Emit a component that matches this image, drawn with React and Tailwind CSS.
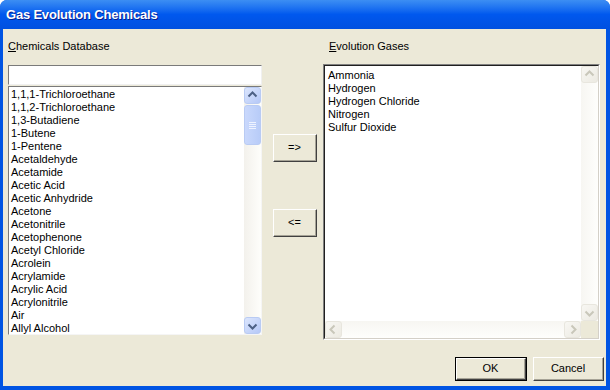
import React from 'react';

const chemicals = [
  '1,1,1-Trichloroethane', '1,1,2-Trichloroethane', '1,3-Butadiene', '1-Butene', '1-Pentene',
  'Acetaldehyde', 'Acetamide', 'Acetic Acid', 'Acetic Anhydride', 'Acetone', 'Acetonitrile',
  'Acetophenone', 'Acetyl Chloride', 'Acrolein', 'Acrylamide', 'Acrylic Acid', 'Acrylonitrile',
  'Air', 'Allyl Alcohol',
];

const gases = ['Ammonia', 'Hydrogen', 'Hydrogen Chloride', 'Nitrogen', 'Sulfur Dioxide'];

const font = { fontFamily: '"Liberation Sans", Arial, sans-serif' };

const Arrow = ({ dir, color }) => {
  const d = {
    up: 'M4.5 9.5 L8.5 5.5 L12.5 9.5',
    down: 'M4.5 7.5 L8.5 11.5 L12.5 7.5',
    left: 'M9.5 4.5 L5.5 8.5 L9.5 12.5',
    right: 'M7.5 4.5 L11.5 8.5 L7.5 12.5',
  }[dir];
  return (
    <svg width="17" height="17" viewBox="0 0 17 17" className="block">
      <path d={d} fill="none" stroke={color} strokeWidth="2" />
    </svg>
  );
};

const ScrollBtn = ({ dir, disabled }) => (
  <div
    className={`w-[17px] h-[17px] shrink-0 rounded-[3px] border ${
      disabled
        ? 'border-[#E8E6DE] bg-gradient-to-br from-[#F8F7F3] to-[#ECEAE2]'
        : 'border-[#B9CBF3] bg-gradient-to-br from-[#DCE6FD] to-[#B5C8F7]'
    } flex items-center justify-center`}
  >
    <div className="-m-px">
      <Arrow dir={dir} color={disabled ? '#C9C7BA' : '#4D6185'} />
    </div>
  </div>
);

const Btn = ({ children, className = '', primary }) => (
  <div className={`${primary ? 'border border-black' : ''} ${className}`}>
    <div className="h-full border-t border-l border-white border-b border-r border-b-[#404040] border-r-[#404040]">
      <div className="h-full border-b border-r border-b-[#A6A396] border-r-[#A6A396] bg-[#ECE9D8] flex items-center justify-center text-[11px] text-black">
        {children}
      </div>
    </div>
  </div>
);

export default function App() {
  return (
    <div className="w-[610px] h-[390px] bg-white" style={font}>
      <div className="w-[610px] h-[390px] flex flex-col rounded-t-[7px] bg-[#0054E3] overflow-hidden">
        <div className="h-[29px] shrink-0 flex items-center pl-[6px] bg-gradient-to-b from-[#3C8EF3] via-[#0058EE] to-[#0050E0]">
          <span className="text-white font-bold text-[13px] tracking-[-0.2px] [text-shadow:1px_1px_0_#0A1E8C]">
            Gas Evolution Chemicals
          </span>
        </div>

        <div className="flex-1 ml-[3px] mr-[4px] mb-[4px] bg-[#ECE9D8] flex flex-col">
          <div className="flex pt-[11px] pl-[5px]">
            {/* left column */}
            <div className="w-[254px] flex flex-col">
              <div className="h-[13px] leading-[13px] text-[11px] text-black">
                <span className="underline underline-offset-1">C</span>hemicals Database
              </div>
              <div className="mt-[12px] h-[20px] bg-white border border-t-[#7A7A7A] border-l-[#7A7A7A] border-b-[#F0F0F0] border-r-[#F0F0F0]" />
              <div className="mt-[1px] h-[249px] bg-white border border-t-[#7A7A7A] border-l-[#7A7A7A] border-b-[#F5F5F5] border-r-[#F5F5F5] flex">
                <div className="flex-1 pl-[2px] pt-[1px] overflow-hidden">
                  {chemicals.map((c) => (
                    <div key={c} className="h-[13px] leading-[13px] text-[11px] text-black whitespace-nowrap">
                      {c}
                    </div>
                  ))}
                </div>
                <div className="w-[17px] flex flex-col bg-gradient-to-r from-[#F3F1EC] to-[#FEFEFB]">
                  <ScrollBtn dir="up" />
                  <div className="mt-px h-[40px] rounded-[3px] border border-[#B9CBF3] bg-gradient-to-r from-[#C9D8FC] to-[#B8CCF8] flex flex-col items-center justify-center gap-[1px]">
                    <div className="w-[7px] h-px bg-[#EEF3FF]" />
                    <div className="w-[7px] h-px bg-[#EEF3FF]" />
                    <div className="w-[7px] h-px bg-[#EEF3FF]" />
                    <div className="w-[7px] h-px bg-[#EEF3FF]" />
                  </div>
                  <div className="flex-1" />
                  <ScrollBtn dir="down" />
                </div>
              </div>
            </div>

            {/* middle column */}
            <div className="w-[61px] pl-[11px] flex flex-col">
              <Btn className="mt-[94px] w-[44px] h-[28px]">=&gt;</Btn>
              <Btn className="mt-[47px] w-[44px] h-[28px]">&lt;=</Btn>
            </div>

            {/* right column */}
            <div className="w-[277px] flex flex-col">
              <div className="h-[13px] leading-[13px] text-[11px] text-black pl-[6px]">
                <span className="underline underline-offset-1">E</span>volution Gases
              </div>
              <div className="mt-[11px] h-[276px] border border-t-[#808080] border-l-[#808080] border-b-white border-r-white">
                <div className="h-full border border-t-[#202020] border-l-[#202020] border-b-[#D4D0C8] border-r-[#D4D0C8] bg-white flex flex-col">
                  <div className="flex-1 flex">
                    <div className="flex-1 pl-[3px] pt-[3px]">
                      {gases.map((g) => (
                        <div key={g} className="h-[13px] leading-[13px] text-[11px] text-black whitespace-nowrap">
                          {g}
                        </div>
                      ))}
                    </div>
                    <div className="w-[17px] flex flex-col justify-between bg-gradient-to-r from-[#F7F6F2] to-[#FEFEFC]">
                      <ScrollBtn dir="up" disabled />
                      <ScrollBtn dir="down" disabled />
                    </div>
                  </div>
                  <div className="h-[17px] flex">
                    <div className="flex-1 flex justify-between bg-gradient-to-b from-[#F7F6F2] to-[#FEFEFC]">
                      <ScrollBtn dir="left" disabled />
                      <ScrollBtn dir="right" disabled />
                    </div>
                    <div className="w-[17px] bg-[#ECE9D8]" />
                  </div>
                </div>
              </div>
            </div>
          </div>

          <div className="flex justify-end gap-[6px] mt-[17px] pr-[2px]">
            <Btn primary className="w-[72px] h-[24px]">OK</Btn>
            <Btn className="w-[71px] h-[24px]">Cancel</Btn>
          </div>
        </div>
      </div>
    </div>
  );
}
